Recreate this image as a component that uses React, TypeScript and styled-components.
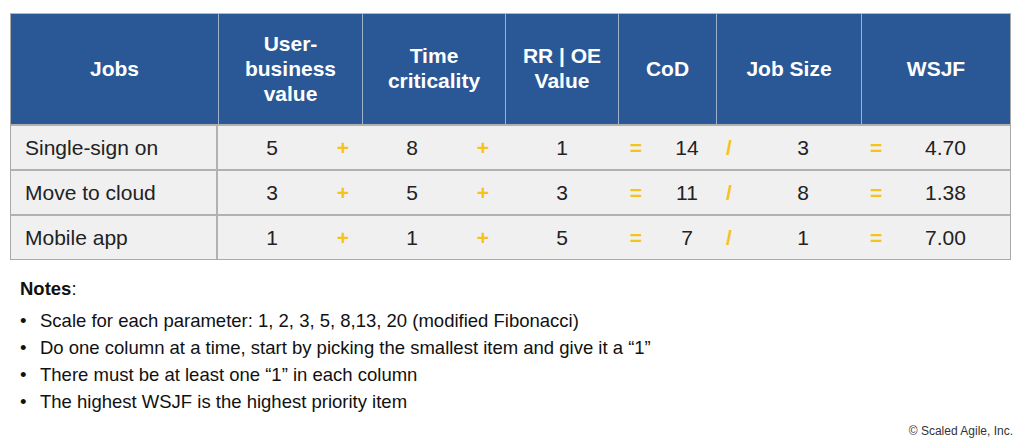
import React from "react";
import styled, { createGlobalStyle } from "styled-components";

const GlobalStyle = createGlobalStyle`
  html, body {
    margin: 0;
    padding: 0;
    background: #ffffff;
  }
  body {
    font-family: "Liberation Sans", Arial, sans-serif;
    color: #222222;
  }
`;

const Page = styled.div`
  width: 1024px;
  height: 445px;
  box-sizing: border-box;
  padding: 13px 11px 0 10px;
  display: flex;
  flex-direction: column;
  overflow: hidden;
`;

const Table = styled.div`
  width: 1001px;
  display: flex;
  flex-direction: column;
  border: 1px solid #a9a9a9;
  border-top-color: #b8b8b8;
  box-sizing: border-box;
`;

const HeaderRow = styled.div`
  display: grid;
  grid-template-columns: 207px 144px 143px 113px 98px 145px 149px;
  height: 110px;
  background: #2a5896;
`;

const HeaderCell = styled.div<{ $first?: boolean }>`
  display: flex;
  align-items: center;
  justify-content: center;
  text-align: center;
  color: #ffffff;
  font-weight: 700;
  font-size: 21px;
  line-height: 25px;
  border-left: ${(p) => (p.$first ? "none" : "1.5px solid #9fb0c9")};
  padding-bottom: 2px;
  box-sizing: border-box;
`;

const DataRow = styled.div`
  display: grid;
  grid-template-columns: 207px 108px 34px 104px 38px 120px 28px 74px 10px 138px 8px 131px;
  height: 45px;
  background: #f0f0f0;
  border-top: 2px solid #b1b1b1;
  box-sizing: border-box;
`;

const JobCell = styled.div`
  display: flex;
  align-items: center;
  padding-left: 14px;
  font-size: 21px;
  color: #222222;
  border-right: 2px solid #b1b1b1;
  box-sizing: border-box;
`;

const ValueCell = styled.div`
  display: flex;
  align-items: center;
  justify-content: center;
  font-size: 21px;
  color: #222222;
  white-space: nowrap;
`;

const OpCell = styled.div`
  display: flex;
  align-items: center;
  justify-content: center;
  font-size: 21px;
  font-weight: 700;
  color: #f6c21c;
  white-space: nowrap;
`;

const Notes = styled.div`
  margin-top: 15px;
  font-size: 18.5px;
  line-height: 27px;
  color: #111111;
  padding-left: 10px;
`;

const NotesTitle = styled.div`
  & b {
    font-weight: 700;
  }
`;

const BulletList = styled.ul`
  list-style: none;
  margin: 5px 0 0 0;
  padding: 0;
`;

const BulletItem = styled.li`
  display: flex;
  white-space: nowrap;
  &::before {
    content: "•";
    width: 20px;
    flex: none;
  }
`;

const Copyright = styled.div`
  align-self: flex-end;
  margin-top: 9px;
  font-size: 12px;
  line-height: 14px;
  color: #333333;
`;

type Row = { job: string; cells: string[] };

const rows: Row[] = [
  { job: "Single-sign on", cells: ["5", "+", "8", "+", "1", "=", "14", "/", "3", "=", "4.70"] },
  { job: "Move to cloud", cells: ["3", "+", "5", "+", "3", "=", "11", "/", "8", "=", "1.38"] },
  { job: "Mobile app", cells: ["1", "+", "1", "+", "5", "=", "7", "/", "1", "=", "7.00"] },
];

const notes = [
  "Scale for each parameter: 1, 2, 3, 5, 8,13, 20 (modified Fibonacci)",
  "Do one column at a time, start by picking the smallest item and give it a \u201c1\u201d",
  "There must be at least one \u201c1\u201d in each column",
  "The highest WSJF is the highest priority item",
];

export default function App() {
  return (
    <>
      <GlobalStyle />
      <Page>
        <Table>
          <HeaderRow>
            <HeaderCell $first>Jobs</HeaderCell>
            <HeaderCell>
              User-
              <br />
              business
              <br />
              value
            </HeaderCell>
            <HeaderCell>
              Time
              <br />
              criticality
            </HeaderCell>
            <HeaderCell>
              RR | OE
              <br />
              Value
            </HeaderCell>
            <HeaderCell>CoD</HeaderCell>
            <HeaderCell>Job Size</HeaderCell>
            <HeaderCell>WSJF</HeaderCell>
          </HeaderRow>
          {rows.map((r) => (
            <DataRow key={r.job}>
              <JobCell>{r.job}</JobCell>
              {r.cells.map((c, i) =>
                i % 2 === 1 ? (
                  <OpCell key={i}>{c}</OpCell>
                ) : (
                  <ValueCell key={i}>{c}</ValueCell>
                )
              )}
            </DataRow>
          ))}
        </Table>
        <Notes>
          <NotesTitle>
            <b>Notes</b>:
          </NotesTitle>
          <BulletList>
            {notes.map((n) => (
              <BulletItem key={n}>{n}</BulletItem>
            ))}
          </BulletList>
        </Notes>
        <Copyright>© Scaled Agile, Inc.</Copyright>
      </Page>
    </>
  );
}
